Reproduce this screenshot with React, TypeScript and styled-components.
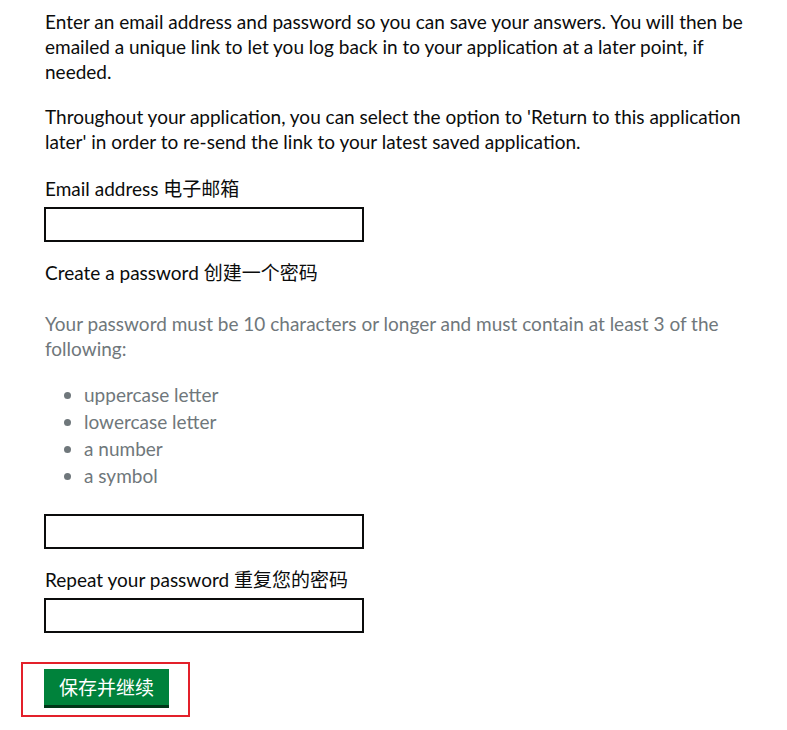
import React from "react";
import styled, { createGlobalStyle } from "styled-components";

const Global = createGlobalStyle`
  html, body { margin: 0; padding: 0; background: #fff; min-height: 100%; }
  body {
    font-family: Lato, "Noto Sans CJK SC", sans-serif;
    color: #0b0c0c;
  }
`;

const Page = styled.main`
  padding: 9px 0 40px 45px;
  width: 705px;
  font-size: 19px;
  line-height: 25px;
`;

const Para = styled.p`
  margin: 0 0 20px;
`;

const Field = styled.div<{ $gapTop: number }>`
  display: flex;
  flex-direction: column;
  margin-top: ${(p) => p.$gapTop}px;
`;

const Label = styled.label`
  display: block;
  margin: 0;
  font-size: 19px;
  line-height: 25px;
`;

const Hint = styled.p`
  margin: 26px 0 0;
  color: #6f777b;
`;

const List = styled.ul`
  margin: 21px 0 0;
  padding: 0 0 0 39px;
  color: #6f777b;
  li {
    line-height: 25px;
    margin-bottom: 2px;
  }
  li::marker {
    font-size: 20px;
  }
`;

const Input = styled.input<{ $gapTop: number }>`
  box-sizing: border-box;
  display: block;
  width: 320px;
  height: 35px;
  margin: ${(p) => p.$gapTop}px 0 0 -1px;
  border: 2px solid #0b0c0c;
  border-radius: 0;
  padding: 4px 6px;
  font: inherit;
  background: #fff;
`;

const ButtonArea = styled.div`
  position: relative;
  margin-top: 36px;
  width: max-content;
  &::after {
    content: "";
    position: absolute;
    left: -24px;
    top: -7px;
    right: -21px;
    bottom: -12px;
    border: 2px solid #e3202a;
    pointer-events: none;
  }
`;

const Button = styled.button`
  display: block;
  margin-left: -1px;
  width: 125px;
  height: 36px;
  border: 0;
  padding: 0;
  background: #00823b;
  box-shadow: 0 3px 0 #003618;
  color: #fff;
  font-family: "Noto Sans CJK SC", sans-serif;
  font-size: 19px;
  line-height: 36px;
  cursor: pointer;
`;

export default function App() {
  return (
    <>
      <Global />
      <Page>
        <Para>
          Enter an email address and password so you can save your answers. You will then be
          emailed a unique link to let you log back in to your application at a later point, if
          needed.
        </Para>
        <Para>
          Throughout your application, you can select the option to 'Return to this application
          later' in order to re-send the link to your latest saved application.
        </Para>
        <Field $gapTop={22}>
          <Label htmlFor="email">Email address 电子邮箱</Label>
          <Input id="email" type="email" $gapTop={6} />
        </Field>
        <Field $gapTop={18}>
          <Label htmlFor="pw">Create a password 创建一个密码</Label>
          <Hint>
            Your password must be 10 characters or longer and must contain at least 3 of the
            following:
          </Hint>
          <List>
            <li>uppercase letter</li>
            <li>lowercase letter</li>
            <li>a number</li>
            <li>a symbol</li>
          </List>
          <Input id="pw" type="password" $gapTop={24} />
        </Field>
        <Field $gapTop={18}>
          <Label htmlFor="pw2">Repeat your password 重复您的密码</Label>
          <Input id="pw2" type="password" $gapTop={6} />
        </Field>
        <ButtonArea>
          <Button type="submit">保存并继续</Button>
        </ButtonArea>
      </Page>
    </>
  );
}
